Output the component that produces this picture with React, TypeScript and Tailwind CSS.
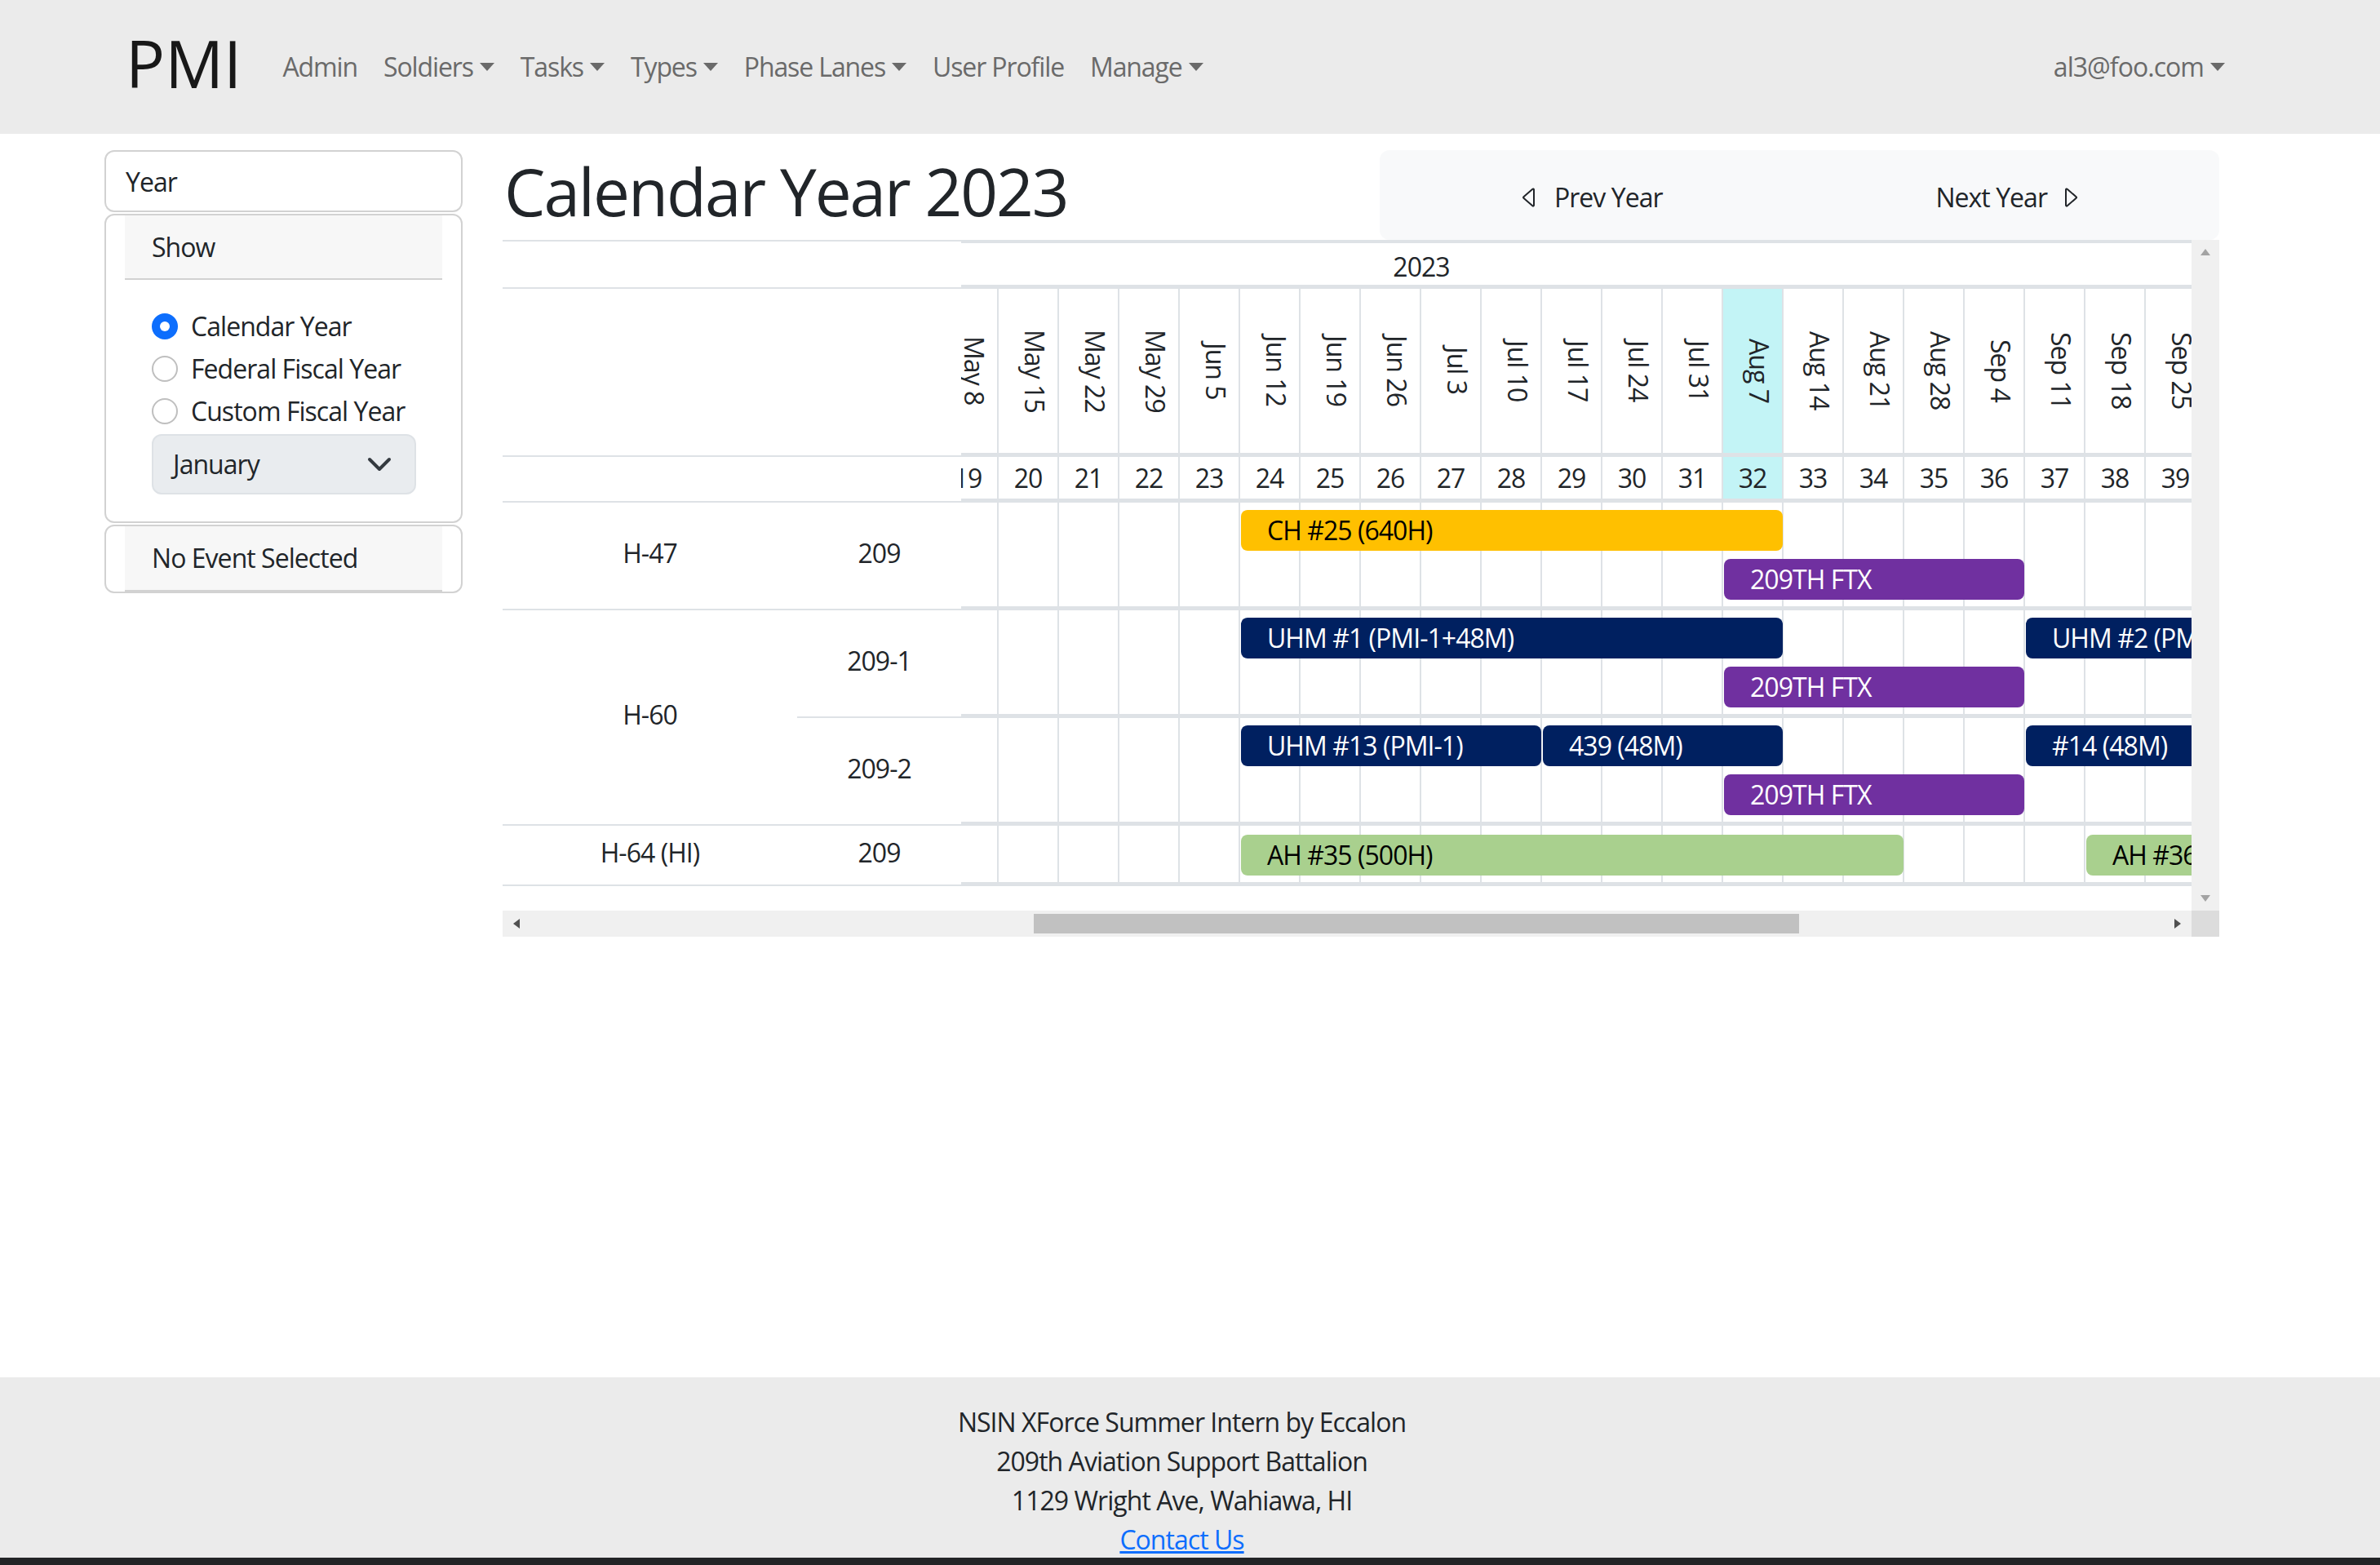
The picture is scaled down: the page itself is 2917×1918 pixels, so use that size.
import React from "react";

const MONTHS = ["Jan", "Feb", "Mar", "Apr", "May", "Jun", "Jul", "Aug", "Sep", "Oct", "Nov", "Dec"];
const WEEK_W = 74;
const CURRENT_WEEK = 32;

const weeks = Array.from({ length: 52 }, (_, i) => {
  const d = new Date(2023, 0, 2 + i * 7);
  return { num: i + 1, label: `${MONTHS[d.getMonth()]} ${d.getDate()}` };
});

type Kind = "ch" | "uhm" | "ftx" | "ah";
type GanttEvent = { label: string; start: number; end: number; lane: number; kind: Kind };

const kindClass: Record<Kind, string> = {
  ch: "bg-[#ffc000] text-black",
  uhm: "bg-[#002060] text-white",
  ftx: "bg-[#7030a0] text-white",
  ah: "bg-[#a9d08e] text-black",
};

const lanes: { id: string; height: string; top: number; events: GanttEvent[] }[] = [
  {
    id: "h47-209",
    height: "h-[132px]",
    top: 9,
    events: [
      { label: "CH #25 (640H)", start: 24, end: 33, lane: 0, kind: "ch" },
      { label: "209TH FTX", start: 32, end: 37, lane: 1, kind: "ftx" },
    ],
  },
  {
    id: "h60-209-1",
    height: "h-[132px]",
    top: 9,
    events: [
      { label: "UHM #1 (PMI-1+48M)", start: 24, end: 33, lane: 0, kind: "uhm" },
      { label: "UHM #2 (PMI-2+48M)", start: 37, end: 46, lane: 0, kind: "uhm" },
      { label: "209TH FTX", start: 32, end: 37, lane: 1, kind: "ftx" },
    ],
  },
  {
    id: "h60-209-2",
    height: "h-[132px]",
    top: 9,
    events: [
      { label: "UHM #13 (PMI-1)", start: 24, end: 29, lane: 0, kind: "uhm" },
      { label: "439 (48M)", start: 29, end: 33, lane: 0, kind: "uhm" },
      { label: "#14 (48M)", start: 37, end: 41, lane: 0, kind: "uhm" },
      { label: "209TH FTX", start: 32, end: 37, lane: 1, kind: "ftx" },
    ],
  },
  {
    id: "h64-209",
    height: "h-[74px]",
    top: 11,
    events: [
      { label: "AH #35 (500H)", start: 24, end: 35, lane: 0, kind: "ah" },
      { label: "AH #36 (500H)", start: 38, end: 49, lane: 0, kind: "ah" },
    ],
  },
];

const Caret = () => (
  <span className="ml-[8px] inline-block h-0 w-0 border-x-[9px] border-t-[10px] border-x-transparent border-t-[#6a6a6a] align-middle" />
);

const NavItem = ({ label, dropdown }: { label: string; dropdown?: boolean }) => (
  <li className="flex items-center px-[16px] text-[#6a6a6a]">
    {label}
    {dropdown && <Caret />}
  </li>
);

const Navbar = () => (
  <nav className="flex h-[164px] shrink-0 items-center bg-[#ebebeb] pl-[154px] pr-[190px]">
    <span className="mb-[10px] text-[80px] leading-[96px] tracking-normal text-[#181818]">PMI</span>
    <ul className="ml-[34px] flex items-center tracking-[-0.035em]">
      <NavItem label="Admin" />
      <NavItem label="Soldiers" dropdown />
      <NavItem label="Tasks" dropdown />
      <NavItem label="Types" dropdown />
      <NavItem label="Phase Lanes" dropdown />
      <NavItem label="User Profile" />
      <NavItem label="Manage" dropdown />
    </ul>
    <div className="ml-auto flex items-center text-[#6a6a6a]">
      al3@foo.com
      <Caret />
    </div>
  </nav>
);

const Radio = ({ label, checked }: { label: string; checked?: boolean }) => (
  <label className="mb-[4px] flex items-center">
    {checked ? (
      <span className="flex h-[32px] w-[32px] items-center justify-center rounded-full bg-[#0d6efd]">
        <span className="h-[12px] w-[12px] rounded-full bg-white" />
      </span>
    ) : (
      <span className="h-[32px] w-[32px] rounded-full border-2 border-[#bfbfbf] bg-white" />
    )}
    <span className="ml-[16px]">{label}</span>
  </label>
);

const Sidebar = () => (
  <aside className="flex w-[439px] shrink-0 flex-col gap-[2px]">
    <div className="flex h-[76px] items-center rounded-[12px] border-2 border-[#d2d2d2] pl-[24px] pt-[2px]">Year</div>
    <div className="rounded-[12px] border-2 border-[#d2d2d2] pb-[33px]">
      <div className="mx-[23px] flex h-[79px] items-center border-b-2 border-[#d2d2d2] bg-[#f7f7f7] pl-[33px]">
        Show
      </div>
      <div className="pl-[56px] pt-[33px]">
        <Radio label="Calendar Year" checked />
        <Radio label="Federal Fiscal Year" />
        <Radio label="Custom Fiscal Year" />
        <div className="mt-[2px] flex h-[74px] w-[324px] items-center justify-between rounded-[12px] border-2 border-[#dee2e6] bg-[#e9ecef] pl-[24px] pr-[27px]">
          January
          <svg width="32" height="24" viewBox="0 0 16 12" fill="none">
            <path d="m2 3 6 6 6-6" stroke="#343a40" strokeWidth="2" strokeLinecap="round" strokeLinejoin="round" />
          </svg>
        </div>
      </div>
    </div>
    <div className="rounded-[12px] border-2 border-[#d2d2d2]">
      <div className="mx-[23px] flex h-[80px] items-center border-b-2 border-[#d2d2d2] bg-[#f7f7f7] pl-[33px]">
        No Event Selected
      </div>
    </div>
  </aside>
);

const YearNav = () => (
  <div className="flex h-[110px] w-[1029px] items-center rounded-[12px] bg-[#f8f9fa]">
    <div className="flex flex-1 items-center justify-center pt-[6px]">
      <svg width="32" height="32" viewBox="0 0 16 16" fill="#212529">
        <path d="M10 12.796V3.204L4.519 8 10 12.796zm-.659.753-5.48-4.796a1 1 0 0 1 0-1.506l5.48-4.796A1 1 0 0 1 11 3.204v9.592a1 1 0 0 1-1.659.753z" />
      </svg>
      <span className="ml-[14px]">Prev Year</span>
    </div>
    <div className="flex flex-1 items-center justify-center pt-[6px]">
      <span className="mr-[12px]">Next Year</span>
      <svg width="32" height="32" viewBox="0 0 16 16" fill="#212529">
        <path d="M6 12.796V3.204L11.481 8 6 12.796zm.659.753 5.48-4.796a1 1 0 0 0 0-1.506L6.659 2.451A1 1 0 0 0 5 3.204v9.592a1 1 0 0 0 1.659.753z" />
      </svg>
    </div>
  </div>
);

const WeekCells = ({ children }: { children?: (w: { num: number; label: string }) => React.ReactNode }) => (
  <>
    {weeks.map((w) => (
      <div
        key={w.num}
        className={`flex h-full w-[74px] shrink-0 items-center justify-center border-r-2 border-[#dee2e6] ${
          children && w.num === CURRENT_WEEK ? "bg-[#c3f4f6]" : ""
        }`}
      >
        {children ? children(w) : null}
      </div>
    ))}
  </>
);

const LeftCell = ({ text, className }: { text?: string; className: string }) => (
  <div className={`flex items-center justify-center border-b-2 border-[#dee2e6] pb-[6px] ${className}`}>{text}</div>
);

const Gantt = () => (
  <div className="flex flex-col">
    <div className="flex h-[822px]">
      {/* frozen label columns */}
      <div className="w-[562px] shrink-0">
        <div className="h-[60px] border-y-2 border-[#dee2e6]" />
        <div className="h-[206px] border-b-2 border-[#dee2e6]" />
        <div className="h-[56px] border-b-2 border-[#dee2e6]" />
        <div className="flex">
          <LeftCell text="H-47" className="h-[132px] w-[361px]" />
          <LeftCell text="209" className="h-[132px] w-[201px]" />
        </div>
        <div className="flex">
          <LeftCell text="H-60" className="h-[264px] w-[361px]" />
          <div className="flex w-[201px] flex-col">
            <LeftCell text="209-1" className="h-[132px]" />
            <LeftCell text="209-2" className="h-[132px]" />
          </div>
        </div>
        <div className="flex">
          <LeftCell text="H-64 (HI)" className="h-[74px] w-[361px]" />
          <LeftCell text="209" className="h-[74px] w-[201px]" />
        </div>
      </div>

      {/* scrolled timeline */}
      <div className="w-[1508px] shrink-0 overflow-hidden">
        <div className="ml-[-1360px] w-[3848px]">
          <div className="flex h-[60px] items-center justify-center border-t-4 border-b-[5px] border-[#dee2e6] pt-[6px]">
            2023
          </div>
          <div className="flex h-[206px] border-b-[5px] border-[#dee2e6]">
            <WeekCells>{(w) => <span className="ml-[16px] [writing-mode:vertical-rl]">{w.label}</span>}</WeekCells>
          </div>
          <div className="flex h-[56px] border-b-[5px] border-[#dee2e6]">
            <WeekCells>{(w) => w.num}</WeekCells>
          </div>
          {lanes.map((row) => (
            <div key={row.id} className={`relative flex border-b-[5px] border-[#dee2e6] ${row.height}`}>
              <WeekCells />
              {row.events.map((ev) => (
                <div
                  key={ev.label + ev.start}
                  className={`absolute flex h-[50px] items-center overflow-hidden whitespace-nowrap rounded-[8px] pl-[32px] ${kindClass[ev.kind]}`}
                  style={{
                    left: (ev.start - 1) * WEEK_W + 1,
                    width: (ev.end - ev.start) * WEEK_W - 2,
                    top: row.top + ev.lane * 60,
                  }}
                >
                  {ev.label}
                </div>
              ))}
            </div>
          ))}
        </div>
      </div>

      {/* vertical scrollbar */}
      <div className="flex w-[34px] shrink-0 flex-col items-center justify-between bg-[#f0f0f0] py-[10px]">
        <svg width="14" height="10" viewBox="0 0 14 10">
          <polygon points="7,1 13,9 1,9" fill="#a3a3a3" />
        </svg>
        <svg width="14" height="10" viewBox="0 0 14 10">
          <polygon points="1,1 13,1 7,9" fill="#a3a3a3" />
        </svg>
      </div>
    </div>

    {/* horizontal scrollbar */}
    <div className="flex h-[32px]">
      <div className="flex w-[2070px] items-center bg-[#f0f0f0]">
        <div className="flex w-[34px] justify-center">
          <svg width="10" height="14" viewBox="0 0 10 14">
            <polygon points="9,1 9,13 1,7" fill="#505050" />
          </svg>
        </div>
        <div className="ml-[617px] h-[24px] w-[938px] bg-[#c1c1c1]" />
        <div className="ml-auto flex w-[34px] justify-center">
          <svg width="10" height="14" viewBox="0 0 10 14">
            <polygon points="1,1 9,7 1,13" fill="#505050" />
          </svg>
        </div>
      </div>
      <div className="w-[34px] bg-[#dcdcdc]" />
    </div>
  </div>
);

export default function App() {
  return (
    <div className="flex min-h-screen flex-col bg-white font-['Open_Sans',sans-serif] text-[32px] leading-[48px] tracking-[-0.03em] text-[#212529]">
      <Navbar />
      <main className="flex flex-1 gap-[49px] pl-[128px] pt-[20px]">
        <Sidebar />
        <section className="w-[2104px]">
          <div className="flex h-[110px] items-start justify-between">
            <h1 className="ml-[2px] mt-[2px] text-[80px] font-medium leading-[96px] tracking-[-0.025em]">
              Calendar Year 2023
            </h1>
            <YearNav />
          </div>
          <Gantt />
        </section>
      </main>
      <footer className="h-[221px] shrink-0 overflow-hidden bg-[#ebebeb] pr-[20px] pt-[31px] text-center">
        <p>NSIN XForce Summer Intern by Eccalon</p>
        <p>209th Aviation Support Battalion</p>
        <p>1129 Wright Ave, Wahiawa, HI</p>
        <p>
          <a href="#" className="text-[#0d6efd] underline">
            Contact Us
          </a>
        </p>
      </footer>
      <div className="h-[9px] shrink-0 bg-[#222426]" />
    </div>
  );
}
